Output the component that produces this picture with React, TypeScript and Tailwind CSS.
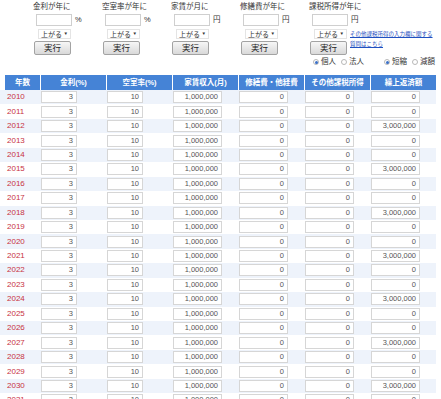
const font = { fontFamily: '"Liberation Sans", "Noto Sans CJK JP", sans-serif' };

const controls = [
  { label: "金利が年に", unit: "%" },
  { label: "空室率が年に", unit: "%" },
  { label: "家賃が月に", unit: "円" },
  { label: "修繕費が年に", unit: "円" },
  { label: "課税所得が年に", unit: "円" },
];

const headers = ["年数", "金利(%)", "空室率(%)", "家賃収入(月)", "修繕費・他経費", "その他課税所得", "繰上返済額"];

const years = Array.from({ length: 22 }, (_, i) => 2010 + i);

function Select() {
  return (
    <div className="mt-[3px] ml-[5px] w-[33px] h-[10px] border border-[#e4e4e4] bg-white flex items-center justify-between pl-[2px] pr-[2px] text-[7px] text-[#333] leading-none whitespace-nowrap">
      <span>上がる</span>
      <span className="text-[4.5px]">▼</span>
    </div>
  );
}

function Button() {
  return (
    <div className="mt-[2px] ml-[1px] w-[37px] h-[14px] border border-[#a3a3a3] rounded-[2px] bg-gradient-to-b from-[#f7f7f7] to-[#d9d9d9] flex items-center justify-center text-[8.5px] text-[#222] leading-none whitespace-nowrap">
      実行
    </div>
  );
}

function Control({ label, unit, last }: { label: string; unit: string; last?: boolean }) {
  return (
    <div className="w-[69px] flex flex-col items-start shrink-0">
      <div className="h-[14px] leading-[14px] text-[7.5px] text-[#333] whitespace-nowrap">{label}</div>
      <div className="ml-[3px] flex items-center gap-[3px]">
        <div className="w-[36px] h-[12px] border border-[#cfcfcf] bg-white" />
        <span className="text-[7.5px] text-[#333]">{unit}</span>
      </div>
      {last ? (
        <div className="flex items-start">
          <div className="flex flex-col items-start">
            <Select />
            <Button />
          </div>
          <div className="ml-[3px] mt-[3px] text-[5.5px] leading-[10px] text-[#1f4fc0] underline whitespace-nowrap">
            その他課税所得の入力欄に関する
            <br />
            質問はこちら
          </div>
        </div>
      ) : (
        <>
          <Select />
          <Button />
        </>
      )}
    </div>
  );
}

function Radio({ checked, label }: { checked?: boolean; label: string }) {
  return (
    <div className="flex items-center gap-[2px] shrink-0 whitespace-nowrap">
      <div className="w-[6px] h-[6px] shrink-0 rounded-full border border-[#b8b8b8] bg-white flex items-center justify-center">
        {checked && <div className="w-[3px] h-[3px] rounded-full bg-[#3a6fc7]" />}
      </div>
      <span className="text-[7.5px] text-[#333]">{label}</span>
    </div>
  );
}

function Cell({ value, w }: { value: string; w: string }) {
  return (
    <div className="flex items-center">
      <div className={`${w} h-[12px] border border-[#d6d6d6] bg-white text-right pr-[3px] text-[7.5px] leading-[10px] text-[#555]`}>
        {value}
      </div>
    </div>
  );
}

export default function App() {
  return (
    <div className="w-[441px] h-[399px] overflow-hidden bg-white" style={font}>
      <div className="h-[75px] flex flex-col">
        <div className="flex pl-[33px]">
          {controls.map((c, i) => (
            <Control key={c.label} label={c.label} unit={c.unit} last={i === 4} />
          ))}
        </div>
        <div className="mt-[1px] ml-[313px] flex items-center gap-[5px] h-[12px] w-[126px]">
          <Radio checked label="個人" />
          <Radio label="法人" />
          <div className="w-[10px] shrink-0" />
          <Radio checked label="短縮" />
          <Radio label="減額" />
        </div>
      </div>

      <div className="ml-[5px] w-[431px] grid grid-cols-[35px_repeat(6,65px)] gap-x-[1px] h-[15px]">
        {headers.map((h) => (
          <div
            key={h}
            className="bg-[#4583d6] text-white font-bold text-[7.5px] flex items-center justify-center whitespace-nowrap"
          >
            {h}
          </div>
        ))}
      </div>

      {years.map((y, i) => {
        const repay = (y - 2012) % 3 === 0 && y >= 2012 && y <= 2030 ? "3,000,000" : "0";
        return (
          <div key={y} className={`w-[436px] h-[14.45px] ${i % 2 === 0 ? "bg-[#eef3fb]" : "bg-white"}`}>
            <div className="ml-[5px] grid grid-cols-[35px_repeat(6,65px)] gap-x-[1px] h-full">
              <div className="flex items-center pl-[2px] text-[8px] text-[#c8323f]">{y}</div>
              <Cell value="3" w="w-[36px]" />
              <Cell value="10" w="w-[36px]" />
              <Cell value="1,000,000" w="w-[49px]" />
              <Cell value="0" w="w-[49px]" />
              <Cell value="0" w="w-[49px]" />
              <Cell value={repay} w="w-[49px]" />
            </div>
          </div>
        );
      })}
    </div>
  );
}
